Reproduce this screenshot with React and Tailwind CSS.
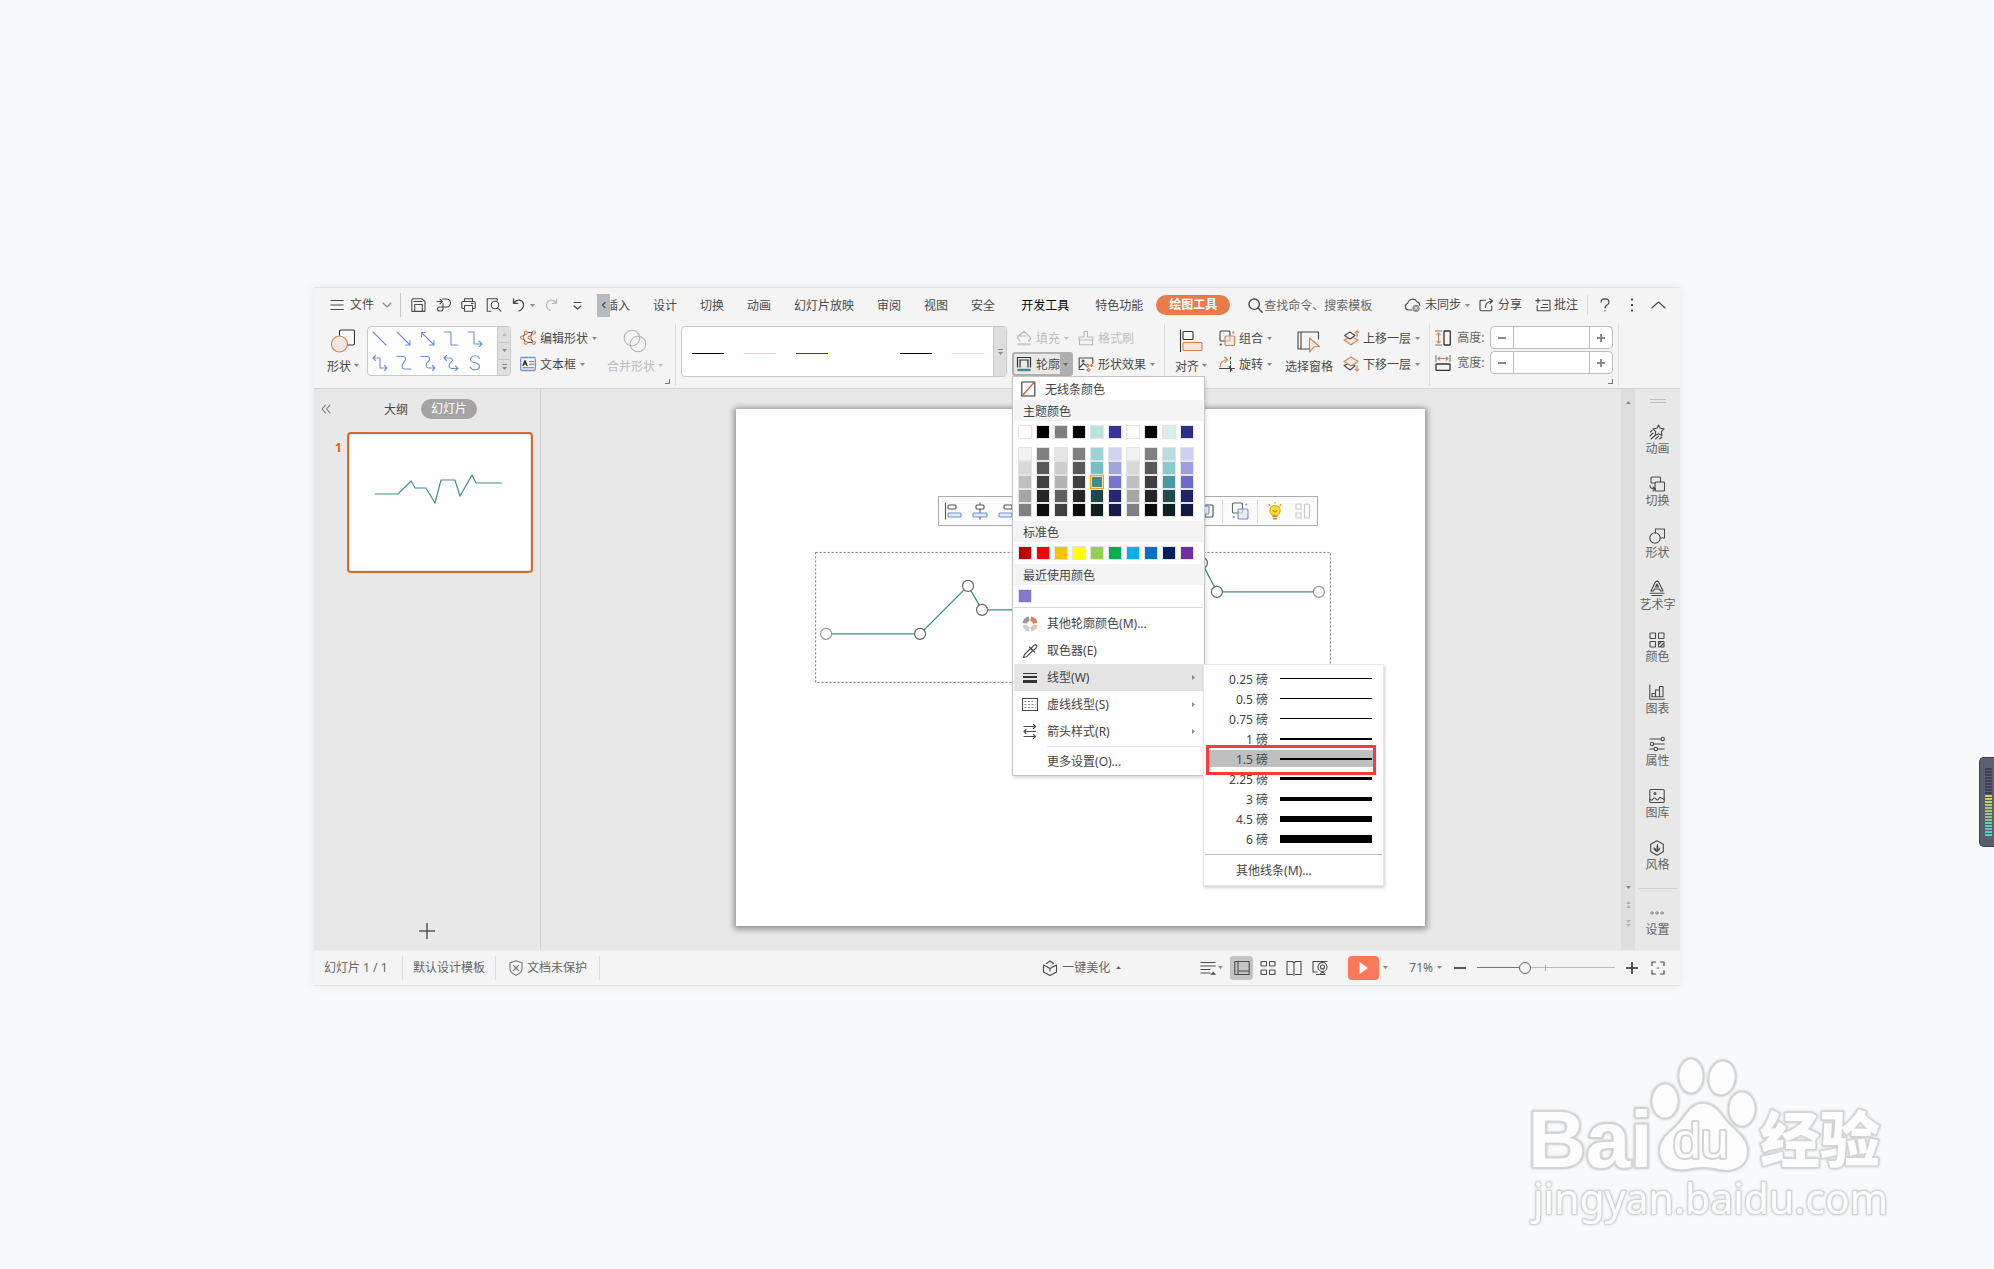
import { useState } from 'react';
import clsx from 'clsx';

const INK = '#4a4a4a';
const ORANGE = '#d08453';
const BLUE = '#6a8fd8';

const Svg = ({ w = 16, h = 16, children, className }) => (
  <svg
    width={w}
    height={h}
    viewBox={`0 0 ${w} ${h}`}
    fill="none"
    stroke={INK}
    strokeWidth="1.1"
    strokeLinecap="round"
    strokeLinejoin="round"
    className={clsx('shrink-0', className)}
    aria-hidden="true"
  >
    {children}
  </svg>
);

const Caret = ({ color = '#8a8a8a', className }) => (
  <svg width="5" height="3" viewBox="0 0 5 3" fill={color} className={clsx('shrink-0', className)} aria-hidden="true">
    <path d="M0 0h5L2.500 3z" />
  </svg>
);

const icons = {
  menu: (
    <Svg w={14} h={14}><path d="M.5 2.500h13M.5 7h13M.5 11.500h13" strokeLinecap="butt" /></Svg>
  ),
  chevron: (
    <Svg w={10} h={14}><path d="M1 5l4 4 4-4" stroke="#8a8a8a" /></Svg>
  ),
  save: (
    <Svg w={15} h={14}><path d="M.8 13V2.300Q.8.8 2.300.8H11l3 2.700V13q0 .4-.4.4H1.200q-.4 0-.4-.4zM3 3.500h8M3.700 13V6.500h7.600V13" /></Svg>
  ),
  pdf: (
    <Svg w={15} h={14}><path d="M1 3.500h5M4 1.200l2.300 2.300L4 5.800M6.500 1h4a3.700 3.700 0 010 8H3.500a2 2 0 100 4h1.800q1.700 0 1.700-2V5.500" /></Svg>
  ),
  print: (
    <Svg w={15} h={14}><path d="M3.500 3.500V.8h8v2.700M3.500 10.500H1.800Q.8 10.500.8 9.500v-5q0-1 1-1h11.400q1 0 1 1v5q0 1-1 1h-1.700M3.500 7.500h8v5.700h-8zM10.500 5.400h1.500" /></Svg>
  ),
  preview: (
    <Svg w={16} h={14}><path d="M5 13.300H1.200V.8h10v1.700M11.500 9.800l3.500 3.400" /><circle cx="9" cy="7" r="3.800" /></Svg>
  ),
  undo: (
    <Svg w={13} h={14}><path d="M1.500 1v4.300h4.300M1.500 5Q4 2 7 2.200q4.500.5 4.500 4.800 0 4-4.500 6" strokeWidth="1.300" /></Svg>
  ),
  redo: (
    <Svg w={13} h={14}><path d="M11.500 1v4.300H7.200M11.500 5Q9 2 6 2.200 1.500 2.700 1.500 7q0 4 3.700 5.500" stroke="#bdbdbd" strokeWidth="1.300" /></Svg>
  ),
  more: (
    <Svg w={10} h={14}><path d="M2 4.500h7M2 8l3.500 3L9 8" /></Svg>
  ),
  search: (
    <Svg w={15} h={15}><circle cx="6.200" cy="6.200" r="5.200" strokeWidth="1.400" /><path d="M10 10l4.200 4.200" strokeWidth="1.400" /></Svg>
  ),
  cloud: (
    <Svg w={17} h={14}>
      <path d="M8 12H4.500A3.500 3.500 0 013.700 5.200 5 5 0 0113 3.800q2.700.7 2.800 3.700" />
      <circle cx="12" cy="10.300" r="3.600" fill="#8c8c8c" stroke="none" />
      <path d="M10.700 9l2.600 2.600m0-2.600l-2.600 2.600" stroke="#fff" strokeWidth="1" />
    </Svg>
  ),
  share: (
    <Svg w={15} h={14}><path d="M6.500 2.200H2.200q-1.200 0-1.200 1.200v8.200q0 1.200 1.200 1.200h9.300q1.200 0 1.200-1.200V8M6.500 9.500Q6.700 3.500 13 3M10.500.7L13.500 3l-2.600 2.600" /></Svg>
  ),
  comment: (
    <Svg w={16} h={14}><path d="M7 2.300h8v10.500H2.200V7.500M.8 2.600h4.400M3 .5v4.400" /><path d="M8 6.500h4.500M6 9.500h6.500" /></Svg>
  ),
  help: (
    <Svg w={10} h={14}><path d="M1 4q.2-3 4-3.200Q9 1 9 4q0 1.800-2 3.100T5 10M5 12.700v.3" strokeWidth="1.200" /></Svg>
  ),
  dots: (
    <Svg w={4} h={14}><path d="M1 1.500h2M1 7h2M1 12.500h2" strokeWidth="2" strokeLinecap="butt" /></Svg>
  ),
  collapse: (
    <Svg w={15} h={14}><path d="M.8 10l6.700-6 6.700 6" /></Svg>
  ),
  shapes: (
    <Svg w={24} h={24}>
      <rect x="8.500" y="1" width="15" height="15" rx="1.500" stroke="#333" fill="#f8f8f8" />
      <circle cx="8.500" cy="15" r="8" stroke={ORANGE} fill="#f4e6e0" />
    </Svg>
  ),
  editShape: (
    <Svg>
      <path d="M6 2.500h6.500L10 7.500l3.500 5H6L2.500 7.500z" />
      <g fill="#f4e6e0" stroke={ORANGE}>
        <circle cx="5.800" cy="2.800" r="1.600" /><circle cx="13.800" cy="2.600" r="1.600" />
        <circle cx="2.200" cy="7.600" r="1.600" /><circle cx="9.700" cy="7.600" r="1.600" />
        <circle cx="5.800" cy="12.800" r="1.600" /><circle cx="13.800" cy="12.800" r="1.600" />
      </g>
    </Svg>
  ),
  textBox: (
    <Svg>
      <rect x=".7" y="1.500" width="14.600" height="13" rx="1" stroke={BLUE} strokeDasharray="2.500 1.200" strokeWidth="1.300" />
      <path d="M3 9.500l2-5 2 5M3.700 8h2.600" strokeWidth="1.300" stroke="#333" />
      <path d="M9.500 5.500h4M9.500 8.300h4M3 11.800h10.500" stroke="#777" strokeWidth="1" />
    </Svg>
  ),
  merge: (
    <Svg w={24} h={24}>
      <g stroke="#b5b5b5"><circle cx="9" cy="9" r="7.800" /><circle cx="15" cy="15" r="7.800" /></g>
    </Svg>
  ),
  fill: (
    <Svg>
      <path d="M4 11L1.500 8 3 5.500 8 1.300l5.500 5L14.700 9 12.500 11M1 6h9" stroke="#b5b5b5" />
      <path d="M2.500 14.300h11" stroke="#cfcfcf" strokeWidth="2.400" />
    </Svg>
  ),
  brush: (
    <Svg><path d="M6 7V1.500h3.500V7h5.300v3H1V7zM1.500 10v4.700h13V10" stroke="#b9b9b9" /></Svg>
  ),
  outline: (
    <Svg>
      <path d="M1.500 11V1.500h13V11M4 11V4h8v7" stroke="#333" strokeWidth="1.200" strokeLinejoin="miter" />
      <path d="M2.500 14h11" stroke="#3e8f93" strokeWidth="2.600" />
    </Svg>
  ),
  effect: (
    <Svg>
      <path d="M6 13.500H1.200V2h13.600v5.500M1.500 11.500l4-4 2.500 2" /><circle cx="5" cy="5" r="1" />
      <g stroke={ORANGE}><path d="M9.500 8l1.700 1.700L9.500 11.400 7.800 9.700zM13.500 8.500l1 1-1 1-1-1zM10.500 12.500l1.500 1.500-1.500 1.500L9 14z" /></g>
    </Svg>
  ),
  align: (
    <Svg w={24} h={24}>
      <path d="M1.500 1v21.500" stroke="#333" /><rect x="4" y="2.500" width="10" height="8" rx="1" stroke="#333" />
      <rect x="4" y="13.500" width="19" height="8" rx="1" stroke={ORANGE} fill="#f4e6e0" />
    </Svg>
  ),
  group: (
    <Svg>
      <rect x="1" y="1" width="10" height="10" rx="1" stroke="#444" />
      <rect x="6" y="6" width="9.500" height="9.500" rx="1" stroke={ORANGE} fill="#f4e6e0aa" />
      <path d="M14 2.500h.5" stroke={ORANGE} strokeWidth="1.800" /><path d="M1.500 14.500h.5" strokeWidth="1.800" />
    </Svg>
  ),
  rotate: (
    <Svg>
      <path d="M1 11Q1.500 4.500 8 3.500M5.500 1l3 2.500-2.200 3" stroke={ORANGE} />
      <path d="M11.500 1v2M11.500 5.500v2M11.500 9.500v6M.5 12.500h15M10 10.500l3 4" />
    </Svg>
  ),
  selectPane: (
    <Svg w={24} h={24}>
      <path d="M21.500 10V3H1v17h11M4 3v17" stroke="#444" />
      <path d="M12.500 9l10 8.500-5.500.3-4.500 5z" stroke={ORANGE} fill="#f4e6e0" />
    </Svg>
  ),
  layerUp: (
    <Svg>
      <path d="M1 10l7-3.500L15 10l-7 4.700z" stroke={ORANGE} fill="#f4e6e0" />
      <path d="M1.500 5.500L7 2l5 3.500L7 9z" fill="#f4f4f4" />
      <path d="M14 6.500V1M12.300 2.700L14 1l1.700 1.700" stroke={ORANGE} />
    </Svg>
  ),
  layerDown: (
    <Svg>
      <path d="M1 9.500L7 7l5 3-5 4z" />
      <path d="M1 5.500L8 1l7 4.500L8 10z" stroke={ORANGE} fill="#f4e6e0" />
      <path d="M14 9.500V15M12.300 13.300L14 15l1.700-1.700" stroke={ORANGE} />
    </Svg>
  ),
  height: (
    <Svg>
      <path d="M.5 1h6M.5 15h6" stroke="#777" /><path d="M3.500 3v10M1.800 4.700L3.500 3l1.700 1.700M1.800 11.300L3.500 13l1.700-1.700" stroke={ORANGE} />
      <rect x="9" y="1" width="6.300" height="14" rx=".5" stroke="#333" strokeWidth="1.300" />
    </Svg>
  ),
  width: (
    <Svg>
      <path d="M1 .5v6M15 .5v6" stroke="#777" /><path d="M3 3.500h10M4.700 1.800L3 3.500l1.700 1.700M11.300 1.800L13 3.500l-1.700 1.700" stroke={ORANGE} />
      <rect x="1" y="9" width="14" height="6.300" rx=".5" stroke="#333" strokeWidth="1.300" />
    </Svg>
  ),
  palette: (
    <Svg>
      <g strokeWidth="4.500" strokeLinecap="butt">
        <path d="M2.800 7.300A5.300 5.300 0 017.300 2.800" stroke="#9a9a9a" />
        <path d="M8.700 2.800a5.300 5.300 0 014.500 4.500" stroke={ORANGE} />
        <path d="M13.200 8.700a5.300 5.300 0 01-4.500 4.500" stroke="#e8c2a8" />
        <path d="M7.300 13.200a5.300 5.300 0 01-4.500-4.500" stroke="#cfcfcf" />
      </g>
    </Svg>
  ),
  picker: (
    <Svg>
      <path d="M1.500 14.500l1-3 6-6 2.200 2.200-6 6z" />
      <path d="M7.500 4l5 5M9.300 5.200l2.700-3q1.500-1.200 2.500.2t-.2 2.400l-3 2.700" />
    </Svg>
  ),
  lineWeight: (
    <Svg><g stroke="#333" strokeLinecap="butt"><path d="M1 3.500h14" strokeWidth="1" /><path d="M1 7h14" strokeWidth="2" /><path d="M1 11.500h14" strokeWidth="3" /></g></Svg>
  ),
  dashes: (
    <Svg><rect x=".5" y="1.500" width="15" height="12" /><path d="M2.500 4.500h11M2.500 7.500h11M2.500 10.500h11" stroke="#888" strokeDasharray="2 1.500" strokeWidth="1" strokeLinecap="butt" /></Svg>
  ),
  arrows: (
    <Svg><path d="M2 2.500h11.500M11.500.5l2 2-2 2M2 7.500h11.500M4 5.500l-2 2 2 2M2 12.500h11.500M11.500 10.500l2 2-2 2" /></Svg>
  ),
  animation: (
    <Svg><path d="M9.500 1l1.700 3.300 3.800.6-2.700 2.700.6 3.800-3.400-1.700-3.400 1.700.6-3.800L4 4.900l3.800-.6zM1 12l3-3M2 15l4-3.500M6.500 15l3-2.700M10.500 15l2.500-2M1.500 8l1.500-1.500" /></Svg>
  ),
  transition: (
    <Svg><rect x="6" y="6" width="9.500" height="9" rx="1" /><path d="M11.500 6V2q0-1-1-1H3Q2 1 2 2v4q0 1 1 1h3M1 9.500q0 3.500 5 3.500M4 11l2.500 2L4 15" /></Svg>
  ),
  shape: (
    <Svg><path d="M6.500 5V1h9v9h-4" /><circle cx="6" cy="10" r="5.200" /></Svg>
  ),
  wordArt: (
    <Svg><path d="M2 11L6.500 1.800Q8 .3 9.500 1.800L14 11h-2.500l-1-2h-5l-1 2zM6.500 7L8 4l1.500 3zM1 13.300h14M3 15.500h10" /></Svg>
  ),
  color: (
    <Svg><rect x="1" y="1" width="5.500" height="5.500" rx=".5" /><rect x="9.500" y="1" width="5.500" height="5.500" rx=".5" /><rect x="1" y="9.500" width="5.500" height="5.500" rx=".5" /><rect x="9.500" y="9.500" width="5.500" height="5.500" rx=".5" /><path d="M10 12l2-2M11.500 14.500l3-3" /></Svg>
  ),
  chart: (
    <Svg><path d="M.8 1v14.200h14.700M3 12.800V9.500h3.500M6.500 12.800V6h4M10.500 12.800V2.500H14v10.300H3" /></Svg>
  ),
  props: (
    <Svg><path d="M.8 3H12M4.700 8h10.600M.8 13H5M8.500 13h6.800" /><circle cx="13.700" cy="3" r="1.700" /><circle cx="3" cy="8" r="1.700" /><circle cx="6.800" cy="13" r="1.700" /></Svg>
  ),
  gallery: (
    <Svg><rect x=".8" y="1.500" width="14.400" height="13" rx="1" /><circle cx="6" cy="5.500" r="1" /><path d="M1 11.500q1.500 1.500 3-.5t3 0 2.500 0 3-1 2.500 1.500" /></Svg>
  ),
  style: (
    <Svg><path d="M8 .8l6.300 3.500v7.400L8 15.200l-6.300-3.500V4.300z" /><path d="M8 11.500Q7 7 8.500 4q1.500 3-.5 7.500zM8 11.500Q4.500 11 4.800 7.500 7.500 8.500 8 11.500zM8 11.500q.3-3 3-3.500 0 3-3 3.500z" fill={INK} strokeWidth=".5" /></Svg>
  ),
  ellipsis: (
    <Svg><g stroke="#888" strokeWidth="1"><circle cx="3" cy="8" r="1.200" /><circle cx="8" cy="8" r="1.200" /><circle cx="13" cy="8" r="1.200" /></g></Svg>
  ),
};

const TextButton = ({ icon, label, caret = true, disabled = false }) => (
  <button
    type="button"
    className={clsx('flex h-6 items-center gap-1 whitespace-nowrap', disabled && 'text-[#bdbdbd]')}
    disabled={disabled}
  >
    {icon}
    <span className="pt-[2px]">{label}</span>
    {caret && <Caret color={disabled ? '#bdbdbd' : '#8a8a8a'} />}
  </button>
);

const BigButton = ({ icon, label, caret = true, disabled = false }) => (
  <button
    type="button"
    className={clsx('flex shrink-0 flex-col items-center whitespace-nowrap', disabled && 'text-[#bdbdbd]')}
    disabled={disabled}
  >
    <span className="flex h-[29px] items-center">{icon}</span>
    <span className="flex h-[21px] items-center gap-[3px]">
      <span className="pt-[2px]">{label}</span>
      {caret && <Caret color={disabled ? '#bdbdbd' : '#8a8a8a'} />}
    </span>
  </button>
);

const Divider = () => <div className="w-px self-stretch bg-[#dfdfdf]" />;

const tabs = ['设计', '切换', '动画', '幻灯片放映', '审阅', '视图', '安全'];

const TitleBar = () => (
  <header className="flex h-[34px] items-center whitespace-nowrap pl-4 pr-[14px]">
    <button type="button" className="flex items-center gap-[6px]">
      {icons.menu}
      <span>文件</span>
      <span className="pl-[2px]">{icons.chevron}</span>
    </button>
    <div className="ml-[8px] h-6 w-px bg-[#c4c4c4]" />
    <div className="flex items-center gap-[10px] pl-[10px]">
      <button type="button" aria-label="保存">{icons.save}</button>
      <button type="button" aria-label="输出为PDF">{icons.pdf}</button>
      <button type="button" aria-label="打印">{icons.print}</button>
      <button type="button" aria-label="打印预览">{icons.preview}</button>
      <button type="button" aria-label="撤消" className="flex items-center gap-[5px]">{icons.undo}<Caret /></button>
      <button type="button" aria-label="恢复">{icons.redo}</button>
      <button type="button" aria-label="自定义" className="pl-1">{icons.more}</button>
    </div>
    <div className="ml-[15px] flex h-[23px] w-[13px] items-center justify-center bg-[#b6bac2]">
      <Svg w={5} h={8}><path d="M4 1.500L1.500 4 4 6.500" /></Svg>
    </div>
    <nav className="flex items-center gap-[23px] pt-[2px]">
      <button type="button" className="flex w-5 justify-end overflow-hidden">插入</button>
      {tabs.map((t) => <button type="button" key={t}>{t}</button>)}
    </nav>
    <nav className="ml-[26px] flex items-center">
      <button type="button" className="pt-[2px] text-black">开发工具</button>
      <button type="button" className="ml-[26px] pt-[2px]">特色功能</button>
      <button type="button" className="ml-[13px] h-5 rounded-full bg-[#e97b49] px-[13px] font-bold leading-5 text-white">绘图工具</button>
    </nav>
    <label className="ml-[18px] flex items-center gap-px">
      {icons.search}
      <input type="text" placeholder="查找命令、搜索模板" aria-label="查找命令、搜索模板" className="h-5 w-[116px] bg-transparent outline-none placeholder:text-[#666]" />
    </label>
    <div className="ml-auto flex items-center">
      <button type="button" className="flex items-center gap-1">{icons.cloud}<span>未同步</span><Caret /></button>
      <button type="button" className="ml-[9px] flex items-center gap-1">{icons.share}<span>分享</span></button>
      <button type="button" className="ml-[13px] flex items-center gap-[3px]">{icons.comment}<span>批注</span></button>
      <div className="ml-[9px] h-5 w-px bg-[#dcdcdc]" />
      <button type="button" aria-label="帮助" className="ml-3">{icons.help}</button>
      <button type="button" aria-label="更多" className="ml-5">{icons.dots}</button>
      <button type="button" aria-label="折叠" className="ml-[17px]">{icons.collapse}</button>
    </div>
  </header>
);

const connectors = [
  'M1 1l13 13',
  'M1 1l13 13M14 9.500V14H9.500',
  'M1.500 1.500l12.500 12.500M14 9.500V14H9.500M1.500 5.500v-4h4',
  'M1 1h7v13h7',
  'M1 1h6v12h8M12 10l3 3-3 3',
  'M1 3h7v10h7M3.500.5L1 3l2.500 2.500M12.500 10.500l2.500 2.500-2.500 2.500',
  'M1 1.500h6.500q3 .5 1.500 4l-2.500 4q-1.500 4 2 4.500H15',
  'M1 1.500h6.500q3 .5 1.500 4l-2.500 3q-1.500 3.500 2 4.500H15M12.500 10.500l2.500 2.500-2.500 2.500',
  'M1 3h6q3 .5 2 3L6.500 9q-1.500 3.500 2 4.500H15M3.500.5L1 3l2.500 2.500M12.500 11l2.500 2.500-2.500 2',
  'M12.500 3.500Q11 .5 7.500.8T3.500 4.500Q4 7 8 7.800t4.500 3.500q0 3.500-4 3.500T3 12',
];

const ShapeGallery = () => (
  <div className="flex h-[50px] w-36 shrink-0 overflow-hidden rounded-[4px] border border-[#c8c8c8] bg-white">
    <div className="grid grow grid-cols-5 grid-rows-2 pl-1 pr-[6px]">
      {connectors.map((d) => (
        <button type="button" key={d} aria-label="线条" className="flex items-center">
          <Svg><path d={d} stroke={BLUE} /></Svg>
        </button>
      ))}
    </div>
    <div className="flex w-[13px] flex-col divide-y divide-[#c4c4c4] border-l border-[#c8c8c8] bg-[#dedede]">
      <span className="flex flex-1 items-center justify-center"><Caret color="#bbb" className="rotate-180" /></span>
      <span className="flex flex-1 items-center justify-center"><Caret /></span>
      <span className="flex flex-1 flex-col items-center justify-center gap-[2px]">
        <span className="h-px w-[5px] bg-[#8a8a8a]" /><Caret />
      </span>
    </div>
  </div>
);

const presetLines = ['bg-black', 'bg-[#b9dfe1]', 'bg-[#333399]', 'bg-white', 'bg-black', 'bg-[#daecec]'];

const themeTop = ['#ffffff', '#000000', '#808080', '#000000', '#b9e0e3', '#333399', '#ffffff', '#000000', '#daeeef', '#2d2d8a'];
const themeShades = [
  ['#f2f2f2', '#d9d9d9', '#bfbfbf', '#a6a6a6', '#808080'],
  ['#808080', '#595959', '#404040', '#262626', '#0d0d0d'],
  ['#e6e6e6', '#cccccc', '#b3b3b3', '#606060', '#404040'],
  ['#808080', '#595959', '#404040', '#262626', '#0d0d0d'],
  ['#9dd3d7', '#74c0c6', '#3d8d93', '#1f464a', '#0e1e1f'],
  ['#d1d1f0', '#a3a3e0', '#7575d1', '#262673', '#1a1a4d'],
  ['#f2f2f2', '#d9d9d9', '#bfbfbf', '#a6a6a6', '#808080'],
  ['#808080', '#595959', '#404040', '#262626', '#0d0d0d'],
  ['#b9dddf', '#8ac9cd', '#459a9f', '#234d50', '#0f2021'],
  ['#cfcfef', '#9d9ddf', '#6a6acf', '#222268', '#161645'],
];
const standard = ['#c00000', '#ff0000', '#ffc000', '#ffff00', '#92d050', '#00b050', '#00b0f0', '#0070c0', '#002060', '#7030a0'];

const Swatch = ({ color, active }) => (
  <button
    type="button"
    aria-label={color}
    className={clsx('block h-[14px] w-[14px] border', active ? 'border-[#f5a300] outline-1 -outline-offset-2 outline-[#ffe2a0]' : 'border-[#e3e4e9]')}
    style={{ backgroundColor: color }}
  />
);

const MenuHeading = ({ children }) => (
  <h3 className="mx-px h-[21px] bg-[#f3f3f3] pl-[9px] leading-[23px]">{children}</h3>
);

const MenuItem = ({ icon, label, submenu, active }) => (
  <button type="button" className={clsx('flex h-[27px] w-full items-center pl-2 pr-2 text-left', active && 'bg-[#e4e4e4]')}>
    <span className="w-[25px]">{icon}</span>
    <span className="grow">{label}</span>
    {submenu && <svg width="3" height="5" viewBox="0 0 3 5" className="fill-[#8a8a8a]"><path d="M0 0v5l3-2.500z" /></svg>}
  </button>
);

const weights = [
  { label: '0.25 磅', line: 'h-px' },
  { label: '0.5 磅', line: 'h-px' },
  { label: '0.75 磅', line: 'h-px' },
  { label: '1 磅', line: 'h-[2px]' },
  { label: '1.5 磅', line: 'h-[2px]', selected: true },
  { label: '2.25 磅', line: 'h-[3px]' },
  { label: '3 磅', line: 'h-1' },
  { label: '4.5 磅', line: 'h-[6px]' },
  { label: '6 磅', line: 'h-2' },
];

const WeightMenu = () => (
  <div className="absolute left-full top-0 z-30 w-[181px] border border-[#e6e6e6] bg-white pt-[5px] shadow-[1px_2px_3px_rgba(0,0,0,0.18)]">
    {weights.map(({ label, line, selected }) => (
      <button
        type="button"
        key={label}
        className={clsx('relative mb-[3px] ml-[5px] flex h-[17px] w-[164px] items-center', selected && 'z-10 bg-[#bfbfbf]')}
      >
        <span className="w-[59px] pt-[3px] text-right">{label}</span>
        <span className={clsx('ml-3 w-[92px] bg-black', line)} />
        {selected && <span className="absolute -bottom-2 -left-[3px] -right-[3px] -top-[5px] border-[3px] border-[#fb3a3a]" />}
      </button>
    ))}
    <div className="mx-px mt-[7px] h-px bg-[#bdbdbd]" />
    <button type="button" className="h-[30px] w-full pl-8 text-left leading-8">其他线条(M)...</button>
  </div>
);

const OutlineMenu = () => (
  <div className="absolute left-0 top-full z-20 w-[193px] border border-[#c4c4c4] bg-white text-[#444] shadow-[1px_2px_3px_rgba(0,0,0,0.15)]">
    <button type="button" className="flex h-[23px] w-full items-center pl-2 text-left">
      <Svg w={24}>
        <rect x=".8" y="1" width="13" height="14" stroke="#333" />
        <path d="M1.500 14.500L13 1.500" stroke="#d45c5c" strokeWidth="1.400" />
      </Svg>
      <span className="pt-[2px]">无线条颜色</span>
    </button>
    <MenuHeading>主题颜色</MenuHeading>
    <div className="mt-1 flex gap-1 pl-[5px]">
      {themeTop.map((c, i) => <Swatch key={i} color={c} />)}
    </div>
    <div className="mb-1 mt-2 flex gap-1 pl-[5px]">
      {themeShades.map((col, i) => (
        <div key={i}>
          {col.map((c, j) => <Swatch key={c} color={c} active={i === 4 && j === 2} />)}
        </div>
      ))}
    </div>
    <MenuHeading>标准色</MenuHeading>
    <div className="my-1 flex gap-1 pl-[5px]">
      {standard.map((c) => <Swatch key={c} color={c} />)}
    </div>
    <MenuHeading>最近使用颜色</MenuHeading>
    <div className="my-1 flex pl-[5px]"><Swatch color="#8278cc" /></div>
    <div className="mx-px mb-[2px] h-px bg-[#d9d9d9]" />
    <div className="mx-px">
      <MenuItem icon={icons.palette} label="其他轮廓颜色(M)..." />
      <MenuItem icon={icons.picker} label="取色器(E)" />
      <div className="relative">
        <MenuItem icon={icons.lineWeight} label="线型(W)" submenu active />
        <WeightMenu />
      </div>
      <MenuItem icon={icons.dashes} label="虚线线型(S)" submenu />
      <MenuItem icon={icons.arrows} label="箭头样式(R)" submenu />
      <div className="my-px ml-[33px] mr-[2px] h-px bg-[#e4e4e4]" />
      <MenuItem label="更多设置(O)..." />
    </div>
  </div>
);

const SizeField = ({ icon, label, id }) => {
  const [value, setValue] = useState('');
  return (
    <div className="flex h-[23px] items-center">
      {icon}
      <label htmlFor={id} className="ml-[6px] w-[33px] whitespace-nowrap text-[#666]">{label}</label>
      <div className="flex h-[23px] w-[123px] overflow-hidden rounded-[4px] border border-[#bcbcbc] bg-white">
        <button type="button" aria-label={`${label}减`} className="flex w-[23px] items-center justify-center border-r border-[#bcbcbc]">
          <span className="h-[2px] w-2 bg-[#8a8a8a]" />
        </button>
        <input id={id} value={value} onChange={(e) => setValue(e.target.value)} className="w-0 grow px-1 outline-none" />
        <button type="button" aria-label={`${label}加`} className="flex w-[23px] items-center justify-center border-l border-[#bcbcbc]">
          <Svg w={8} h={8}><path d="M4 0v8M0 4h8" stroke="#8a8a8a" strokeWidth="2" strokeLinecap="butt" /></Svg>
        </button>
      </div>
    </div>
  );
};

const Launcher = () => <span className="absolute bottom-[2px] right-[5px] h-[5px] w-[5px] border-b border-r border-[#777]" />;

const Ribbon = () => (
  <div className="flex border-b border-[#d4d4d4] py-[2px]">
    <div className="relative flex items-start pb-[10px] pl-[13px] pr-[12px] pt-[2px]">
      <BigButton icon={icons.shapes} label="形状" />
      <div className="ml-2"><ShapeGallery /></div>
      <div className="ml-[9px] space-y-[2px]">
        <TextButton icon={icons.editShape} label="编辑形状" />
        <TextButton icon={icons.textBox} label="文本框" />
      </div>
      <div className="ml-[10px]"><BigButton icon={icons.merge} label="合并形状" disabled /></div>
      <Launcher />
    </div>
    <Divider />
    <div className="flex items-start pl-[5px] pr-[9px] pt-[2px]">
      <div className="flex h-[51px] w-[326px] overflow-hidden rounded-[4px] border border-[#c8c8c8] bg-white">
        <div className="flex grow items-center gap-5 pl-[10px] pt-1">
          {presetLines.map((c, i) => <button type="button" key={i} aria-label="线条样式" className={clsx('h-px w-8', c)} />)}
        </div>
        <button type="button" aria-label="更多样式" className="flex w-[13px] flex-col items-center justify-center gap-[2px] border-l border-[#c8c8c8] bg-[#dedede]">
          <span className="h-px w-[5px] bg-[#8a8a8a]" /><Caret />
        </button>
      </div>
      <div className="ml-[5px] grid grid-cols-[61px_auto] gap-x-[5px] gap-y-[2px]">
        <div className="pl-1"><TextButton icon={icons.fill} label="填充" disabled /></div>
        <TextButton icon={icons.brush} label="格式刷" caret={false} disabled />
        <div className="relative">
          <button type="button" className="flex h-6 w-full items-center gap-1 rounded-[3px] border-2 border-[#b0b0b0] bg-[#e9e9e9] pl-[2px]">
            {icons.outline}
            <span className="whitespace-nowrap pt-[2px]">轮廓</span>
            <span className="-ml-1 flex grow items-center justify-center self-stretch bg-[#b0b0b0]"><Caret color="#666" /></span>
          </button>
          <OutlineMenu />
        </div>
        <TextButton icon={icons.effect} label="形状效果" />
      </div>
    </div>
    <Divider />
    <div className="flex items-start pl-[10px] pr-[9px] pt-[2px]">
      <BigButton icon={icons.align} label="对齐" />
      <div className="ml-3 space-y-[2px]">
        <TextButton icon={icons.group} label="组合" />
        <TextButton icon={icons.rotate} label="旋转" />
      </div>
      <div className="ml-[13px]"><BigButton icon={icons.selectPane} label="选择窗格" caret={false} /></div>
      <div className="ml-[10px] space-y-[2px]">
        <TextButton icon={icons.layerUp} label="上移一层" />
        <TextButton icon={icons.layerDown} label="下移一层" />
      </div>
    </div>
    <Divider />
    <div className="relative space-y-[2px] pl-[5px] pr-[5px] pt-[2px]">
      <SizeField id="shape-height" icon={icons.height} label="高度:" />
      <SizeField id="shape-width" icon={icons.width} label="宽度:" />
      <Launcher />
    </div>
    <Divider />
  </div>
);

const SlidePanel = () => (
  <aside className="relative flex w-[227px] shrink-0 flex-col border-r border-[#d2d2d2]">
    <div className="flex h-10 items-center pl-[6px]">
      <button type="button" aria-label="收起">
        <Svg w={12} h={12}><path d="M5.500 2L2 6l3.500 4M10 2L6.500 6l3.500 4" stroke="#777" /></Svg>
      </button>
      <button type="button" className="ml-[52px] pt-[2px]">大纲</button>
      <button type="button" className="ml-[13px] h-5 rounded-full bg-[#a4a4a4] px-[10px] leading-5 text-white">幻灯片</button>
    </div>
    <div className="mt-[3px] flex pl-[21px]">
      <span className="w-3 pt-[6px] font-bold leading-5 text-[#dd6418]">1</span>
      <div className="h-[141px] w-[186px] rounded-[4px] border-2 border-[#d9692b] bg-[#e8e8e8] p-px">
        <svg viewBox="0 0 180 135" className="h-full w-full bg-white" fill="none" stroke="#3d8d93" strokeWidth="1.200">
          <path d="M25 59H48l13-13 4 7h11l9 15 6-23h14l5 16 12-21 4 8h26" />
        </svg>
      </div>
    </div>
    <button type="button" aria-label="新建幻灯片" className="mb-[11px] mt-auto self-center">
      <Svg><path d="M8 0v16M0 8h16" stroke="#555" strokeWidth="1.500" strokeLinecap="butt" /></Svg>
    </button>
  </aside>
);

const alignLeft = (
  <Svg w={18} h={18}>
    <path d="M1.500 1v16" stroke="#555" /><rect x="4" y="3" width="8" height="4" rx="1" stroke="#555" />
    <rect x="4" y="11" width="13" height="4" rx="1" stroke={BLUE} fill="#e3ebfa" />
  </Svg>
);

const alignCenter = (
  <Svg w={18} h={18}>
    <path d="M9 1v16" stroke="#555" /><rect x="5" y="3" width="8" height="4" rx="1" stroke="#555" fill="#fff" />
    <rect x="2" y="11" width="14" height="4" rx="1" stroke={BLUE} fill="#e3ebfa" />
  </Svg>
);

const alignRight = (
  <Svg w={18} h={18}>
    <path d="M16.500 1v16" stroke="#555" /><rect x="6" y="3" width="8" height="4" rx="1" stroke="#555" />
    <rect x="1" y="11" width="13" height="4" rx="1" stroke={BLUE} fill="#e3ebfa" />
  </Svg>
);

const FloatBar = () => (
  <div className="absolute left-[202px] top-[87px] flex h-[30px] w-[380px] items-center justify-between border border-[#acacac] bg-[#fbfbfb] px-[5px]">
    <div className="flex items-center gap-[9px]">
      {alignLeft}
      {alignCenter}
      {alignRight}
    </div>
    <div className="flex items-center">
      <Svg w={18} h={18}>
        <rect x="9" y="3" width="8" height="12" rx="1" /><rect x="2" y="4" width="11" height="8" rx="1" stroke={BLUE} fill="#e3ebfa" />
      </Svg>
      <div className="mx-2 h-6 w-px bg-[#dcdcdc]" />
      <Svg w={18} h={18}>
        <rect x="1.500" y="1" width="10" height="10" rx="1" stroke="#666" />
        <rect x="7" y="7" width="10" height="10" rx="1" stroke={BLUE} fill="#dce6f9aa" />
        <path d="M15 2.500h.5M2.500 15h.5" stroke="#7d9fde" strokeWidth="1.800" />
      </Svg>
      <div className="mx-2 h-6 w-px bg-[#dcdcdc]" />
      <Svg w={18} h={18}>
        <path d="M9 3.200a5.200 5.200 0 015.200 5.200q0 2.500-2.700 5h-5q-2.700-2.500-2.700-5A5.200 5.200 0 019 3.200z" fill="#ffdf2e" stroke="#e9a520" />
        <path d="M7 14.500h4M7.500 16.700h3" stroke="#c98a3a" strokeWidth="1.600" />
        <path d="M9 0v1M3 2.500l1 1M15 2.500l-1 1M7 8.500l2 1.500 2-1.500" stroke="#c98a3a" />
      </Svg>
      <Svg w={18} h={18} className="ml-[10px]">
        <g stroke="#c9c9c9"><rect x="2" y="2" width="5" height="5" /><rect x="2" y="11" width="5" height="5" /><rect x="10.500" y="2" width="5" height="14" rx="1" /></g>
      </Svg>
    </div>
  </div>
);

const nodes = [[90, 225], [184, 225], [232, 177], [246, 201], [466, 154], [481, 183], [583, 183]];

const Canvas = () => (
  <main className="flex flex-1 justify-center pb-6 pr-px pt-5">
    <div className="relative aspect-[4/3] w-[689px] bg-white shadow-[0_1px_6px_2px_rgba(0,0,0,0.4)]">
      <svg viewBox="0 0 689 517" className="h-full w-full" fill="none">
        <rect x="79.500" y="143.500" width="515" height="130" stroke="#777" strokeDasharray="2 2" />
        <path d="M90 225h94l48-48 14 24h41l35 59 24-90h55l18 62 47-78 15 29h102" stroke="#3d8d93" strokeWidth="1.300" />
        {nodes.map(([x, y], i) => (
          <circle key={i} cx={x} cy={y} r="5.500" fill="#fff" stroke={i === 0 || i === 6 ? '#999' : '#666'} strokeWidth="1.200" />
        ))}
      </svg>
      <FloatBar />
    </div>
  </main>
);

const DoubleCaret = ({ up }) => (
  <span className={clsx('flex flex-col gap-px', up && 'rotate-180')}>
    <Caret color="#b5b5b5" />
    <Caret color="#b5b5b5" />
  </span>
);

const ScrollBar = () => (
  <div className="flex w-[14px] shrink-0 flex-col items-center bg-[#dedede] pt-3">
    <Caret className="rotate-180" />
    <div className="mt-auto flex flex-col items-center gap-3 pb-[23px]">
      <Caret />
      <DoubleCaret up />
      <DoubleCaret />
    </div>
  </div>
);

const sideItems = [
  ['动画', icons.animation],
  ['切换', icons.transition],
  ['形状', icons.shape],
  ['艺术字', icons.wordArt],
  ['颜色', icons.color],
  ['图表', icons.chart],
  ['属性', icons.props],
  ['图库', icons.gallery],
  ['风格', icons.style],
];

const SideBar = () => (
  <aside className="flex w-[45px] shrink-0 flex-col items-center text-[#666]">
    <div className="mt-[10px] h-1 w-4 border-y border-[#bdbdbd]" />
    <div className="mt-[21px] flex flex-col gap-[18px]">
      {sideItems.map(([label, icon]) => (
        <button type="button" key={label} className="flex flex-col items-center">
          {icon}
          <span className="leading-[18px]">{label}</span>
        </button>
      ))}
    </div>
    <div className="mt-auto h-px w-[38px] bg-[#d0d0d0]" />
    <button type="button" className="mb-[11px] mt-4 flex flex-col items-center">
      {icons.ellipsis}
      <span className="leading-[18px]">设置</span>
    </button>
  </aside>
);

const StatusBar = () => {
  const [zoom, setZoom] = useState(33);
  return (
    <footer className="flex h-[35px] items-center whitespace-nowrap border-t border-[#ececec] text-[#666]">
      <span className="w-[88px] pl-[10px]">幻灯片 1 / 1</span>
      <div className="h-6 w-px bg-[#dcdcdc]" />
      <span className="px-[10px]">默认设计模板</span>
      <div className="h-6 w-px bg-[#dcdcdc]" />
      <button type="button" className="flex items-center gap-[3px] px-3">
        <Svg><path d="M8 .8l6 2v6q0 4-6 6.500-6-2.500-6-6.500v-6zM5.500 5.500l5 5M10.500 5.500l-5 5" stroke="#777" /></Svg>
        文档未保护
      </button>
      <div className="h-6 w-px bg-[#dcdcdc]" />

      <div className="ml-auto flex items-center pr-[15px]">
        <button type="button" className="mr-[79px] flex items-center gap-1">
          <Svg><path d="M1.500 5L8 8.500 14.500 5v7L8 15.500 1.500 12zM4.500 3.500L8 1l3.500 2.500M8 8.500v2.500" /></Svg>
          一键美化
          <Caret color="#666" className="ml-[2px] rotate-180" />
        </button>
        <button type="button" aria-label="备注" className="flex items-center gap-[2px]">
          <Svg><path d="M.5 2.500h15M.5 6h15M.5 9.500h10M.5 13h10" strokeLinecap="butt" /><path d="M11 14.500h4.500l-2.200-2.500z" fill={INK} strokeWidth=".5" /></Svg>
          <Caret />
        </button>
        <button type="button" aria-label="普通视图" className="ml-[7px] flex h-6 w-[23px] items-center justify-center rounded-[3px] bg-[#c4c4c4]">
          <Svg><path d="M.8 1.500h14.400v13H.8zM4 1.500v13M4 11h11" /></Svg>
        </button>
        <button type="button" aria-label="幻灯片浏览" className="ml-[7px]">
          <Svg><rect x="1" y="1.500" width="5.500" height="4.500" rx=".5" /><rect x="9.500" y="1.500" width="5.500" height="4.500" rx=".5" /><rect x="1" y="10" width="5.500" height="4.500" rx=".5" /><rect x="9.500" y="10" width="5.500" height="4.500" rx=".5" /></Svg>
        </button>
        <button type="button" aria-label="阅读视图" className="ml-[10px]">
          <Svg><path d="M6.500 14.500H1v-13h5.500L8 3l1.500-1.500H15v13H9.500M8 3v12.500" /></Svg>
        </button>
        <button type="button" aria-label="演讲者视图" className="ml-[10px]">
          <Svg><path d="M5 12H1V1.500h14M4.500 14.500h3" /><circle cx="10.500" cy="7" r="4.500" /><circle cx="10.500" cy="7" r="2" /><path d="M8 14.500h5l-2.500-3z" /></Svg>
        </button>
        <button type="button" aria-label="放映" className="ml-5 flex h-6 w-[31px] items-center justify-center rounded-[4px] bg-[#fb7858]">
          <svg width="9" height="12" viewBox="0 0 9 12" fill="#fff"><path d="M.5 0v12L9 6z" /></svg>
        </button>
        <Caret className="ml-1" />
        <button type="button" className="ml-[21px] flex items-center gap-1">71%<Caret /></button>
        <button type="button" aria-label="缩小" className="ml-[12px] h-[2px] w-3 bg-[#555]" />
        <div className="relative ml-[11px] flex w-[138px] items-center">
          <span className="absolute left-[68px] h-[6px] w-px bg-[#aaa]" />
          <input
            type="range"
            aria-label="显示比例"
            value={zoom}
            onChange={(e) => setZoom(e.target.value)}
            className="h-px w-full appearance-none bg-gradient-to-r from-[#777] from-34% to-[#bbb] to-34% [&::-webkit-slider-thumb]:relative [&::-webkit-slider-thumb]:h-3 [&::-webkit-slider-thumb]:w-3 [&::-webkit-slider-thumb]:appearance-none [&::-webkit-slider-thumb]:rounded-full [&::-webkit-slider-thumb]:border [&::-webkit-slider-thumb]:border-[#666] [&::-webkit-slider-thumb]:bg-[#f4f4f4]"
          />
        </div>
        <button type="button" aria-label="放大" className="ml-[11px]">
          <Svg w={12} h={12}><path d="M6 0v12M0 6h12" stroke="#555" strokeWidth="2" strokeLinecap="butt" /></Svg>
        </button>
        <button type="button" aria-label="最佳显示比例" className="ml-[13px]">
          <Svg w={14} h={14}><path d="M1 4.500V1h3.500M9.500 1H13v3.500M13 9.500V13H9.500M4.500 13H1V9.500M6.500 7h1" strokeWidth="1.200" /></Svg>
        </button>
      </div>
    </footer>
  );
};

const Watermark = () => (
  <div className="absolute bottom-[34px] right-[100px]">
    <svg
      width="370"
      height="185"
      viewBox="0 0 370 185"
      fill="#fdfdfe"
      stroke="#d2d4d5"
      strokeWidth="2"
      strokeLinejoin="round"
      className="drop-shadow-[0_0_1px_#c4c6c7]"
    >
      <ellipse cx="141" cy="51" rx="13.500" ry="17.500" />
      <ellipse cx="167" cy="26" rx="12.500" ry="17.500" />
      <ellipse cx="198" cy="28" rx="13.500" ry="17.500" transform="rotate(8 198 28)" />
      <ellipse cx="218" cy="59" rx="13.500" ry="17.500" />
      <path d="M179 53Q189 53 197 63 203 72 213 81 225 91 224 103 222 119 204 121 197 121 190 119 179 117 168 119 161 121 154 120 136 119 135 101 135 91 145 82 156 73 162 63 169 53 179 53Z" />
      <g fontFamily="'Liberation Sans', sans-serif" fontWeight="bold" paintOrder="stroke">
        <text x="4" y="117" fontSize="80" strokeWidth="4">Bai</text>
        <text x="149" y="108" fontSize="50" fontWeight="normal" strokeWidth="4">du</text>
      </g>
      <text x="236" y="112" fontSize="60" fontWeight="900" strokeWidth="3" paintOrder="stroke" fontFamily="'Noto Sans CJK SC', sans-serif">经验</text>
      <text x="9" y="164" fontSize="41" strokeWidth="2" paintOrder="stroke" fontFamily="'Noto Sans', sans-serif">jingyan.baidu.com</text>
    </svg>
  </div>
);

const meter = [
  'bg-[#3c4050]', 'bg-[#3c4050]', 'bg-[#3c4050]', 'bg-[#3c4050]', 'bg-[#3c4050]', 'bg-[#3c4050]', 'bg-[#3c4050]', 'bg-[#3c4050]', 'bg-[#3c4050]',
  'bg-[#d8cc4c]', 'bg-[#d0cc50]', 'bg-[#c4cc54]', 'bg-[#b8cc5a]', 'bg-[#aacc62]', 'bg-[#9ccc6c]', 'bg-[#8ecc78]',
  'bg-[#80cc86]', 'bg-[#74cc94]', 'bg-[#68cca0]', 'bg-[#5cccac]', 'bg-[#54ccb6]', 'bg-[#4cd0c4]', 'bg-[#44d4cc]',
];

const LevelMeter = () => (
  <div className="absolute right-0 top-[757px] flex w-[15px] flex-col gap-px rounded-l-[5px] border border-r-0 border-[#3c4050] bg-[#5a5f70] py-[10px] pl-[5px] pr-[2px]">
    {meter.map((c, i) => <span key={i} className={clsx('h-[2px] w-full', c)} />)}
  </div>
);

export default function App() {
  return (
    <div className="relative min-h-screen overflow-hidden bg-[#f7f9fb] px-[314px] pt-[287px] font-['Noto_Sans','Noto_Sans_CJK_SC',sans-serif] text-[12px] leading-4 text-[#4a4a4a]">
      <div className="border-y border-[#e2e4e6] bg-[#f4f4f4] shadow-[0_0_10px_rgba(0,0,0,0.08)]">
        <TitleBar />
        <Ribbon />
        <div className="flex bg-[#e8e8e8]">
          <SlidePanel />
          <Canvas />
          <ScrollBar />
          <SideBar />
        </div>
        <StatusBar />
      </div>
      <Watermark />
      <LevelMeter />
    </div>
  );
}
